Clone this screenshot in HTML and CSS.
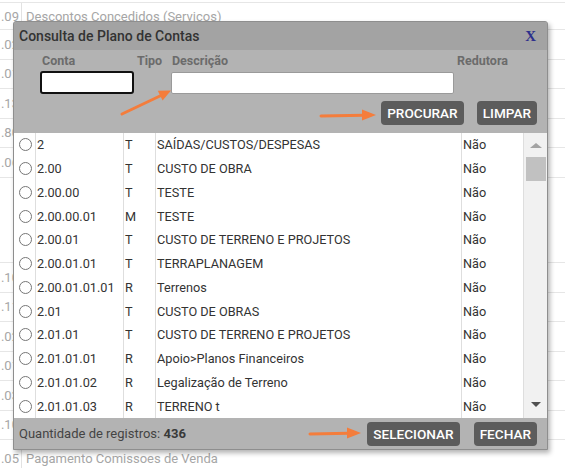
FILE: index.html
```html
<!DOCTYPE html>
<html lang="pt-BR">
<head>
<meta charset="utf-8">
<title>Consulta de Plano de Contas</title>
<link rel="stylesheet" href="styles.css">
</head>
<body>
<div class="bg">
  <div class="bg-row first"><div class="bg-code">1.09</div><div class="bg-desc">Descontos Concedidos (Serviços)</div></div>
  <div class="bg-row"><div class="bg-code">1.02</div><div class="bg-desc"></div></div>
  <div class="bg-row"><div class="bg-code">1.01</div><div class="bg-desc"></div></div>
  <div class="bg-row"><div class="bg-code">1.13</div><div class="bg-desc"></div></div>
  <div class="bg-row"><div class="bg-code">1.80</div><div class="bg-desc"></div></div>
  <div class="bg-row"><div class="bg-code">1.06</div><div class="bg-desc"></div></div>
  <div class="bg-row tall"><div class="bg-code"></div><div class="bg-desc"></div></div>
  <div class="bg-row"><div class="bg-code">1.10</div><div class="bg-desc"></div></div>
  <div class="bg-row"><div class="bg-code">1.11</div><div class="bg-desc"></div></div>
  <div class="bg-row"><div class="bg-code">1.02</div><div class="bg-desc"></div></div>
  <div class="bg-row"><div class="bg-code">1.01</div><div class="bg-desc"></div></div>
  <div class="bg-row"><div class="bg-code">1.03</div><div class="bg-desc"></div></div>
  <div class="bg-row"><div class="bg-code">1.10</div><div class="bg-desc"></div></div>
  <div class="bg-row last"><div class="bg-code">1.05</div><div class="bg-desc">Pagamento Comissoes de Venda</div></div>
</div>

<div class="modal">
  <div class="modal-head">
    <span class="modal-title">Consulta de Plano de Contas</span>
    <span class="modal-close">X</span>
  </div>
  <div class="filter">
    <div class="filter-grid">
      <span class="flabel l-conta">Conta</span>
      <span class="flabel l-tipo">Tipo</span>
      <span class="flabel l-desc">Descrição</span>
      <span class="flabel l-red">Redutora</span>
      <div class="in-conta"></div>
      <div></div>
      <div class="in-desc"></div>
    </div>
    <div class="filter-actions">
      <span class="btn">PROCURAR</span>
      <span class="btn">LIMPAR</span>
    </div>
  </div>
  <div class="list">
    <div class="rows">
      <div class="row"><div class="cell"><input type="radio" class="radio" name="c"></div><div class="cell">2</div><div class="cell">T</div><div class="cell">SAÍDAS/CUSTOS/DESPESAS</div><div class="cell">Não</div></div>
      <div class="row"><div class="cell"><input type="radio" class="radio" name="c"></div><div class="cell">2.00</div><div class="cell">T</div><div class="cell">CUSTO DE OBRA</div><div class="cell">Não</div></div>
      <div class="row"><div class="cell"><input type="radio" class="radio" name="c"></div><div class="cell">2.00.00</div><div class="cell">T</div><div class="cell">TESTE</div><div class="cell">Não</div></div>
      <div class="row"><div class="cell"><input type="radio" class="radio" name="c"></div><div class="cell">2.00.00.01</div><div class="cell">M</div><div class="cell">TESTE</div><div class="cell">Não</div></div>
      <div class="row"><div class="cell"><input type="radio" class="radio" name="c"></div><div class="cell">2.00.01</div><div class="cell">T</div><div class="cell">CUSTO DE TERRENO E PROJETOS</div><div class="cell">Não</div></div>
      <div class="row"><div class="cell"><input type="radio" class="radio" name="c"></div><div class="cell">2.00.01.01</div><div class="cell">T</div><div class="cell">TERRAPLANAGEM</div><div class="cell">Não</div></div>
      <div class="row"><div class="cell"><input type="radio" class="radio" name="c"></div><div class="cell">2.00.01.01.01</div><div class="cell">R</div><div class="cell">Terrenos</div><div class="cell">Não</div></div>
      <div class="row"><div class="cell"><input type="radio" class="radio" name="c"></div><div class="cell">2.01</div><div class="cell">T</div><div class="cell">CUSTO DE OBRAS</div><div class="cell">Não</div></div>
      <div class="row"><div class="cell"><input type="radio" class="radio" name="c"></div><div class="cell">2.01.01</div><div class="cell">T</div><div class="cell">CUSTO DE TERRENO E PROJETOS</div><div class="cell">Não</div></div>
      <div class="row"><div class="cell"><input type="radio" class="radio" name="c"></div><div class="cell">2.01.01.01</div><div class="cell">R</div><div class="cell">Apoio&gt;Planos Financeiros</div><div class="cell">Não</div></div>
      <div class="row"><div class="cell"><input type="radio" class="radio" name="c"></div><div class="cell">2.01.01.02</div><div class="cell">R</div><div class="cell">Legalização de Terreno</div><div class="cell">Não</div></div>
      <div class="row"><div class="cell"><input type="radio" class="radio" name="c"></div><div class="cell">2.01.01.03</div><div class="cell">R</div><div class="cell">TERRENO t</div><div class="cell">Não</div></div>
    </div>
    <div class="scroll">
      <div class="arrow-up"></div>
      <div class="thumb"></div>
      <div class="arrow-down"></div>
    </div>
  </div>
  <div class="modal-foot">
    <span class="count">Quantidade de registros: <b>436</b></span>
    <div class="foot-actions">
      <span class="btn">SELECIONAR</span>
      <span class="btn">FECHAR</span>
    </div>
  </div>
</div>

<svg class="annot" width="565" height="468" viewBox="0 0 565 468">
  <g stroke="#f47d3c" stroke-width="3" stroke-linecap="round" fill="#f47d3c">
    <line x1="122" y1="114" x2="161" y2="95.5"/>
    <polygon points="171,90.5 162.6,100.6 157.8,90.8" stroke="none"/>
    <line x1="321" y1="116" x2="364" y2="115.3"/>
    <polygon points="376,115 362,109.5 362,120.5" stroke="none"/>
    <line x1="310" y1="434" x2="349" y2="433.3"/>
    <polygon points="361,433 347,427.5 347,438.5" stroke="none"/>
  </g>
</svg>
</body>
</html>
```

FILE: styles.css
```css
* { box-sizing: border-box; }

body {
  margin: 0;
  width: 565px;
  height: 468px;
  overflow: hidden;
  position: relative;
  background: #fff;
  font-family: Roboto, "Liberation Sans", sans-serif;
}

/* background page table */
.bg { padding-top: 2px; }
.bg-row {
  display: flex;
  height: 29.5px;
  border-top: 1px solid #e6e6e6;
  color: #a6a6a6;
  font-size: 13px;
}
.bg-row.first { height: 27px; }
.bg-row.tall { height: 85.5px; }
.bg-row.last { height: 38px; }
.bg-code {
  width: 22px;
  display: flex;
  align-items: center;
  justify-content: flex-end;
  overflow: hidden;
  white-space: nowrap;
  padding-right: 2px;
  border-right: 1px solid #e2e2e2;
}
.bg-desc {
  flex: 1;
  display: flex;
  align-items: center;
  padding-left: 4px;
  white-space: nowrap;
}

/* modal */
.modal {
  position: absolute;
  left: 13px;
  top: 21px;
  width: 535px;
  height: 429px;
  border: 1px solid #8e8e8e;
  border-radius: 3px 3px 0 0;
  box-shadow: 2px 3px 5px rgba(0, 0, 0, 0.3);
  background: #b3b3b3;
  display: flex;
  flex-direction: column;
}
.modal-head {
  height: 28px;
  background: #a3a3a3;
  display: flex;
  align-items: center;
  justify-content: space-between;
  padding: 0 11px 0 5px;
  border-radius: 2px 2px 0 0;
}
.modal-title {
  font-size: 14px;
  font-weight: 500;
  color: #333;
}
.modal-close {
  font-family: "Liberation Serif", serif;
  font-weight: bold;
  font-size: 15px;
  color: #2c2f8c;
}

.filter {
  height: 83px;
  padding: 2px 10px 0 26px;
}
.filter-grid {
  display: grid;
  grid-template-columns: 94px 31px 283px auto;
  grid-template-rows: 18px 23px;
  column-gap: 3px;
  row-gap: 1px;
}
.flabel {
  font-size: 12.5px;
  font-weight: bold;
  color: #6b6b6b;
  line-height: 18px;
}
.l-conta { padding-left: 2px; }
.l-desc { padding-left: 1px; }
.in-conta {
  height: 23px;
  border: 2px solid #111;
  border-radius: 3px;
  background: #fff;
}
.in-desc {
  height: 22px;
  margin-top: 1px;
  border: 1px solid #9a9a9a;
  border-radius: 2px;
  background: #fff;
}
.filter-actions {
  display: flex;
  justify-content: flex-end;
  gap: 13px;
  margin-top: 7px;
}
.btn {
  height: 24px;
  padding: 0 6px;
  display: flex;
  align-items: center;
  background: #5c5c5c;
  color: #fff;
  border-radius: 4px;
  font-size: 13.6px;
  font-weight: 500;
}

/* list */
.list {
  height: 285px;
  display: flex;
  background: #fff;
}
.rows { width: 509px; }
.row {
  display: grid;
  grid-template-columns: 22px 88px 32px 306px 61px;
  height: 23.75px;
  font-size: 12.7px;
  color: #333;
}
.cell {
  display: flex;
  align-items: center;
  padding-left: 1px;
  white-space: nowrap;
  overflow: hidden;
  border-right: 1px solid #dedede;
}
.cell:last-child { border-right: 0; }
.radio {
  margin: 0 0 0 4px;
  width: 13px;
  height: 13px;
}
.scroll {
  width: 24px;
  background: #f1f1f1;
  border-left: 1px solid #dedede;
  display: flex;
  flex-direction: column;
  align-items: center;
  padding-top: 10px;
}
.arrow-up {
  width: 0;
  height: 0;
  border-left: 6px solid transparent;
  border-right: 6px solid transparent;
  border-bottom: 5px solid #a3a3a3;
}
.thumb {
  margin-top: 9px;
  width: 20px;
  height: 24px;
  background: #c1c1c1;
}
.arrow-down {
  margin-top: auto;
  margin-bottom: 11px;
  width: 0;
  height: 0;
  border-left: 5px solid transparent;
  border-right: 5px solid transparent;
  border-top: 5px solid #505050;
}

.modal-foot {
  flex: 1;
  display: flex;
  align-items: center;
  justify-content: space-between;
  padding: 0 10px 0 5px;
}
.count {
  font-size: 13px;
  color: #444;
}
.count b { color: #3a3a3a; }
.foot-actions {
  display: flex;
  gap: 14px;
}

.annot {
  position: absolute;
  left: 0;
  top: 0;
  pointer-events: none;
}
```
